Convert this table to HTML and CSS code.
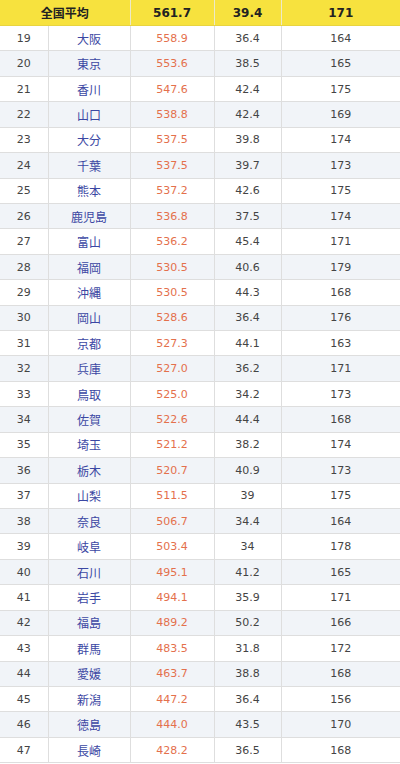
FILE: index.html
```html
<!DOCTYPE html>
<html lang="ja">
<head>
<meta charset="utf-8">
<link rel="stylesheet" href="styles.css">
</head>
<body>
<table class="rank">
<colgroup><col class="c1"><col class="c2"><col class="c3"><col class="c4"><col class="c5"></colgroup>
<thead>
<tr class="avg"><th colspan="2" class="jp">全国平均</th><th>561.7</th><th>39.4</th><th>171</th></tr>
</thead>
<tbody>
<tr><td>19</td><td class="name">大阪</td><td class="val">558.9</td><td>36.4</td><td>164</td></tr>
<tr><td>20</td><td class="name">東京</td><td class="val">553.6</td><td>38.5</td><td>165</td></tr>
<tr><td>21</td><td class="name">香川</td><td class="val">547.6</td><td>42.4</td><td>175</td></tr>
<tr><td>22</td><td class="name">山口</td><td class="val">538.8</td><td>42.4</td><td>169</td></tr>
<tr><td>23</td><td class="name">大分</td><td class="val">537.5</td><td>39.8</td><td>174</td></tr>
<tr><td>24</td><td class="name">千葉</td><td class="val">537.5</td><td>39.7</td><td>173</td></tr>
<tr><td>25</td><td class="name">熊本</td><td class="val">537.2</td><td>42.6</td><td>175</td></tr>
<tr><td>26</td><td class="name">鹿児島</td><td class="val">536.8</td><td>37.5</td><td>174</td></tr>
<tr><td>27</td><td class="name">富山</td><td class="val">536.2</td><td>45.4</td><td>171</td></tr>
<tr><td>28</td><td class="name">福岡</td><td class="val">530.5</td><td>40.6</td><td>179</td></tr>
<tr><td>29</td><td class="name">沖縄</td><td class="val">530.5</td><td>44.3</td><td>168</td></tr>
<tr><td>30</td><td class="name">岡山</td><td class="val">528.6</td><td>36.4</td><td>176</td></tr>
<tr><td>31</td><td class="name">京都</td><td class="val">527.3</td><td>44.1</td><td>163</td></tr>
<tr><td>32</td><td class="name">兵庫</td><td class="val">527.0</td><td>36.2</td><td>171</td></tr>
<tr><td>33</td><td class="name">鳥取</td><td class="val">525.0</td><td>34.2</td><td>173</td></tr>
<tr><td>34</td><td class="name">佐賀</td><td class="val">522.6</td><td>44.4</td><td>168</td></tr>
<tr><td>35</td><td class="name">埼玉</td><td class="val">521.2</td><td>38.2</td><td>174</td></tr>
<tr><td>36</td><td class="name">栃木</td><td class="val">520.7</td><td>40.9</td><td>173</td></tr>
<tr><td>37</td><td class="name">山梨</td><td class="val">511.5</td><td>39</td><td>175</td></tr>
<tr><td>38</td><td class="name">奈良</td><td class="val">506.7</td><td>34.4</td><td>164</td></tr>
<tr><td>39</td><td class="name">岐阜</td><td class="val">503.4</td><td>34</td><td>178</td></tr>
<tr><td>40</td><td class="name">石川</td><td class="val">495.1</td><td>41.2</td><td>165</td></tr>
<tr><td>41</td><td class="name">岩手</td><td class="val">494.1</td><td>35.9</td><td>171</td></tr>
<tr><td>42</td><td class="name">福島</td><td class="val">489.2</td><td>50.2</td><td>166</td></tr>
<tr><td>43</td><td class="name">群馬</td><td class="val">483.5</td><td>31.8</td><td>172</td></tr>
<tr><td>44</td><td class="name">愛媛</td><td class="val">463.7</td><td>38.8</td><td>168</td></tr>
<tr><td>45</td><td class="name">新潟</td><td class="val">447.2</td><td>36.4</td><td>156</td></tr>
<tr><td>46</td><td class="name">徳島</td><td class="val">444.0</td><td>43.5</td><td>170</td></tr>
<tr><td>47</td><td class="name">長崎</td><td class="val">428.2</td><td>36.5</td><td>168</td></tr>
</tbody>
</table>
</body>
</html>
```

FILE: styles.css
```css
html, body {
  margin: 0;
  padding: 0;
  background: #ffffff;
}
body {
  font-family: "DejaVu Sans", "Noto Sans CJK JP", sans-serif;
  color: #444444;
  overflow: hidden;
}
.rank {
  width: 400px;
  table-layout: fixed;
  border-collapse: collapse;
  font-size: 11px;
}
.c1 { width: 48px; }
.c2 { width: 82px; }
.c3 { width: 84px; }
.c4 { width: 67px; }
.c5 { width: 119px; }
.rank th,
.rank td {
  padding: 0;
  text-align: center;
  border-right: 1px solid #dedede;
  border-bottom: 1px solid #dedede;
  white-space: nowrap;
}
.rank th:last-child,
.rank td:last-child {
  border-right: none;
}
.avg th {
  height: 25px;
  background: #f7e23e;
  color: #222222;
  font-weight: bold;
  font-size: 12px;
  border-bottom: 1px solid #e8d440;
  border-right-color: #ece9c8;
}
.avg .jp {
  font-family: "Noto Sans CJK JP", sans-serif;
  font-size: 12px;
}
.rank tbody tr {
  height: 25.43px;
}
.rank tbody tr:nth-child(even) {
  background: #f1f4f8;
}
.name {
  font-family: "Noto Sans CJK JP", sans-serif;
  font-size: 12px;
  color: #3b47a3;
}
.val {
  color: #e4704c;
}
```
